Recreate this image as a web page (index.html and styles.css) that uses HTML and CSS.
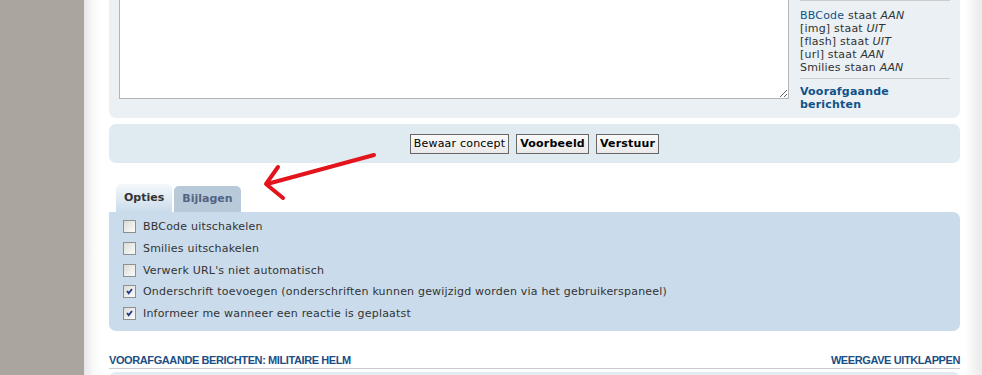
FILE: index.html
```html
<!DOCTYPE html>
<html>
<head>
    <title>Bericht plaatsen</title>
    <link rel="stylesheet" href="styles.css">
</head>
<body>

    <div class="side"></div>

    <div class="page">

        <!-- Editor panel (top is scrolled out of view) -->
        <div class="panel panel-post">
            <div class="editor">
                <textarea class="message"></textarea>
            </div>
            <div class="status">
                <hr>
                <div class="status-list">
                    <a href="#">BBCode</a> staat <em>AAN</em><br>
                    [img] staat <em>UIT</em><br>
                    [flash] staat <em>UIT</em><br>
                    [url] staat <em>AAN</em><br>
                    Smilies staan <em>AAN</em>
                </div>
                <hr>
                <a href="#" class="review-link">Voorafgaande berichten</a>
            </div>
        </div>

        <div class="panel panel-submit">
            <input type="button" class="button2" value="Bewaar concept">
            <input type="button" class="button1" value="Voorbeeld">
            <input type="button" class="button1" value="Verstuur">
        </div>

        <ul class="tabs">
            <li class="tab active">Opties</li>
            <li class="tab">Bijlagen</li>
        </ul>

        <div class="panel panel-options">
            <label class="option"><span class="check"></span> BBCode uitschakelen</label>
            <label class="option"><span class="check"></span> Smilies uitschakelen</label>
            <label class="option"><span class="check"></span> Verwerk URL's niet automatisch</label>
            <label class="option"><span class="check checked"><svg width="11" height="11" viewBox="0 0 11 11"><path d="M3 5 L4.7 7.3 L8 3" stroke="#21388e" stroke-width="1.8" fill="none"/></svg></span> Onderschrift toevoegen (onderschriften kunnen gewijzigd worden via het gebruikerspaneel)</label>
            <label class="option"><span class="check checked"><svg width="11" height="11" viewBox="0 0 11 11"><path d="M3 5 L4.7 7.3 L8 3" stroke="#21388e" stroke-width="1.8" fill="none"/></svg></span> Informeer me wanneer een reactie is geplaatst</label>
        </div>

        <div class="heading">
            <span>Voorafgaande berichten: Militaire helm</span>
            <a href="#">Weergave uitklappen</a>
        </div>

        <div class="panel panel-review"></div>

        <!-- red arrow drawn over the screenshot -->
        <svg class="arrow" width="130" height="60" viewBox="0 0 130 60">
            <path d="M114 6 L7 35" stroke="#e3141c" stroke-width="4" stroke-linecap="round" fill="none"/>
            <path d="M18 18 L6 35 L23 49" stroke="#e3141c" stroke-width="4" stroke-linecap="round" stroke-linejoin="round" fill="none"/>
        </svg>
    </div>

</body>
</html>
```

FILE: styles.css
```css
/* Page frame */
body {
    margin: 0;
    display: flex;
    height: 375px;
    overflow: hidden;
    background-color: #aaa59f;
    font-family: "DejaVu Sans", Verdana, sans-serif;
    font-size: 11px;
    letter-spacing: 0.2px;
    color: #333;
}

.side {
    width: 84px;
    flex-shrink: 0;
}

.page {
    position: relative;
    flex: 1;
    padding: 0 23px 0 25px;
    background: linear-gradient(to right, #e6e6e6 0, #fafafa 10px, #fff 18px, #fff calc(100% - 18px), #f2f2f2 calc(100% - 8px), #e9e9e9 100%);
}

a {
    color: #105289;
    text-decoration: none;
}

/* Panels */
.panel {
    border-radius: 7px;
}

.panel-post {
    display: flex;
    margin-top: -40px;
    padding: 0 10px 7px 10px;
    background-color: #eaf0f4;
    border-radius: 0 0 7px 7px;
}

.editor {
    width: 670px;
}

.message {
    display: block;
    box-sizing: border-box;
    width: 670px;
    height: 139px;
    margin: 0;
    border: 1px solid #b4b4b4;
    background: #fff;
    resize: both;
}

.status {
    margin-left: 11px;
    width: 150px;
    padding-top: 40px;
    line-height: 13px;
}

.status hr {
    border: 0;
    border-top: 1px solid #ccc;
    margin: 0;
    height: 0;
}

.status-list {
    padding: 8px 0 4px 0;
}

.status em {
    font-style: italic;
}

.review-link {
    display: block;
    padding-top: 6px;
    font-weight: bold;
}

.panel-submit {
    margin-top: 6px;
    height: 39px;
    display: flex;
    justify-content: center;
    align-items: center;
    gap: 7px;
    background-color: #e0eaf1;
}

.button1, .button2 {
    font-family: "DejaVu Sans", Verdana, sans-serif;
    font-size: 11px;
    letter-spacing: 0.2px;
    color: #000;
    height: 20px;
    padding: 0 3px;
    border: 1px solid #666;
    background: linear-gradient(#fafafa, #e9e9e9);
    border-radius: 0;
    margin: 0;
}

.button1 {
    font-weight: bold;
}

/* Tabs */
.tabs {
    list-style: none;
    display: flex;
    align-items: flex-end;
    gap: 2px;
    margin: 21px 0 0 7px;
    padding: 0;
    height: 28px;
}

.tab {
    font-weight: bold;
    letter-spacing: 0;
    border-radius: 5px 5px 0 0;
    height: 26px;
    line-height: 25px;
    padding: 0 8px;
    color: #536482;
    background-color: #b8c9d9;
}

.tab.active {
    height: 28px;
    line-height: 28px;
    color: #333;
    background: linear-gradient(#f4f8fb, #cadceb);
}

.panel-options {
    background-color: #cadceb;
    border-radius: 0 7px 7px 7px;
    padding: 4px 14px 7px 14px;
}

.option {
    display: flex;
    align-items: center;
    height: 21.7px;
}

.check {
    box-sizing: border-box;
    display: flex;
    align-items: center;
    justify-content: center;
    width: 13px;
    height: 13px;
    margin-right: 7px;
    border: 1px solid #8e8f8f;
    background: linear-gradient(135deg, #dcdcd7, #fbfbfb);
}

/* Review heading */
.heading {
    display: flex;
    justify-content: space-between;
    margin-top: 22px;
    padding-bottom: 1px;
    border-bottom: 1px solid #ccc;
    font-family: "Liberation Sans", Arial, sans-serif;
    font-size: 11px;
    letter-spacing: -0.4px;
    font-weight: bold;
    text-transform: uppercase;
    line-height: 14px;
}

.heading span, .heading a {
    color: #1a4f85;
}

.panel-review {
    margin-top: 3px;
    height: 40px;
    background-color: #e3ecf3;
}

.arrow {
    position: absolute;
    left: 176px;
    top: 149px;
}
```
